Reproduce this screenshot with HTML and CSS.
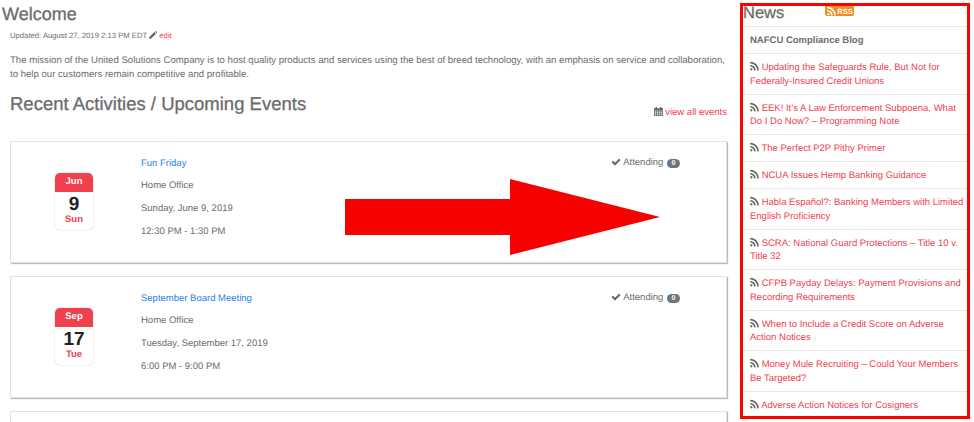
FILE: index.html
```html
<!DOCTYPE html>
<html lang="en">
<head>
    <meta charset="UTF-8">
    <title>Welcome</title>
    <link rel="stylesheet" href="styles.css">
</head>
<body>
    <svg width="0" height="0" class="defs">
        <symbol id="i-rss" viewBox="0 0 1792 1792"><path d="M576 1344q0 80-56 136t-136 56-136-56-56-136 56-136 136-56 136 56 56 136zm512 123q2 28-17 48-18 21-47 21h-135q-25 0-43-16.5t-20-41.5q-22-229-184.5-391.5t-391.5-184.5q-25-2-41.5-20t-16.5-43v-135q0-29 21-47 17-17 43-17h5q160 13 306 80.5t259 181.5q114 113 181.5 259t80.5 306zm512 2q2 27-18 47-18 20-46 20h-143q-26 0-44.5-17.5t-19.5-42.5q-12-215-101-408.5t-231.5-336-336-231.5-408.5-102q-25-1-42.5-19.5t-17.5-43.5v-143q0-28 20-46 18-18 44-18h3q262 13 501.5 120t425.5 294q187 186 294 425.5t120 501.5z"/></symbol>
        <symbol id="i-check" viewBox="0 0 1792 1792"><path d="M1671 566q0 40-28 68l-724 724-136 136q-28 28-68 28t-68-28l-136-136-362-362q-28-28-28-68t28-68l136-136q28-28 68-28t68 28l294 295 656-657q28-28 68-28t68 28l136 136q28 28 28 68z"/></symbol>
    </svg>

    <div class="page">
        <main class="main">
            <h1 class="title">Welcome</h1>
            <div class="intro">
                <p class="updated">Updated: August 27, 2019 2:13 PM EDT
                    <svg class="icon-pencil" viewBox="0 0 12 12"><path d="M0 12l.8-3.2L8 1.6 10.4 4 3.2 11.2zM8.8.8l.6-.6q.5-.4 1 0l1.400 1.400q.4.500 0 1l-.6.6z"/></svg>
                    <a href="#" class="red-link">edit</a></p>
                <p class="mission">The mission of the United Solutions Company is to host quality products and services using the best of breed technology, with an emphasis on service and collaboration,<br>to help our customers remain competitive and profitable.</p>
                <div class="events-head">
                    <h2>Recent Activities / Upcoming Events</h2>
                    <span class="all-events">
                        <svg class="icon-cal" viewBox="0 0 12 12"><path d="M2 0h2v1.500h4V0h2v1.500h2V12H0V1.500h2zM1 4.500v1.500h2V4.500zm3 0v1.500h1.700V4.500zm2.700 0v1.500H8V4.500zm2.300 0v1.500h2V4.500zM1 7v1.500h2V7zm3 0v1.500h1.700V7zm2.700 0v1.500H8V7zM9 7v1.500h2V7zM1 9.500V11h2V9.500zm3 0V11h1.700V9.500zm2.700 0V11H8V9.500zm2.300 0V11h2V9.500z" fill-rule="evenodd"/></svg>
                        <a href="#" class="red-link">view all events</a>
                    </span>
                </div>

                <div class="card">
                    <div class="cal">
                        <div class="cal-month">Jun</div>
                        <div class="cal-day">9</div>
                        <div class="cal-week">Sun</div>
                    </div>
                    <div class="card-info">
                        <a href="#" class="event-name">Fun Friday</a>
                        <div>Home Office</div>
                        <div>Sunday, June 9, 2019</div>
                        <div>12:30 PM - 1:30 PM</div>
                    </div>
                    <div class="attending"><svg class="icon-check"><use href="#i-check"/></svg> Attending <span class="badge">0</span></div>
                </div>

                <div class="card">
                    <div class="cal">
                        <div class="cal-month">Sep</div>
                        <div class="cal-day">17</div>
                        <div class="cal-week">Tue</div>
                    </div>
                    <div class="card-info">
                        <a href="#" class="event-name">September Board Meeting</a>
                        <div>Home Office</div>
                        <div>Tuesday, September 17, 2019</div>
                        <div>6:00 PM - 9:00 PM</div>
                    </div>
                    <div class="attending"><svg class="icon-check"><use href="#i-check"/></svg> Attending <span class="badge">0</span></div>
                </div>

                <div class="card"></div>
            </div>
        </main>

        <aside class="news">
            <div class="news-head">
                <h2>News</h2>
                <span class="rss-badge"><svg class="icon-rss-badge"><use href="#i-rss"/></svg>RSS</span>
            </div>
            <ul class="news-list">
                <li class="news-source">NAFCU Compliance Blog</li>
                <li><svg class="icon-rss"><use href="#i-rss"/></svg> <a href="#">Updating the Safeguards Rule, But Not for Federally-Insured Credit Unions</a></li>
                <li><svg class="icon-rss"><use href="#i-rss"/></svg> <a href="#">EEK! It’s A Law Enforcement Subpoena, What Do I Do Now? – Programming Note</a></li>
                <li><svg class="icon-rss"><use href="#i-rss"/></svg> <a href="#">The Perfect P2P Pithy Primer</a></li>
                <li><svg class="icon-rss"><use href="#i-rss"/></svg> <a href="#">NCUA Issues Hemp Banking Guidance</a></li>
                <li><svg class="icon-rss"><use href="#i-rss"/></svg> <a href="#">Habla Español?: Banking Members with Limited English Proficiency</a></li>
                <li><svg class="icon-rss"><use href="#i-rss"/></svg> <a href="#">SCRA: National Guard Protections – Title 10 v. Title 32</a></li>
                <li><svg class="icon-rss"><use href="#i-rss"/></svg> <a href="#">CFPB Payday Delays: Payment Provisions and Recording Requirements</a></li>
                <li><svg class="icon-rss"><use href="#i-rss"/></svg> <a href="#">When to Include a Credit Score on Adverse Action Notices</a></li>
                <li><svg class="icon-rss"><use href="#i-rss"/></svg> <a href="#">Money Mule Recruiting – Could Your Members Be Targeted?</a></li>
                <li><svg class="icon-rss"><use href="#i-rss"/></svg> <a href="#">Adverse Action Notices for Cosigners</a></li>
            </ul>
        </aside>
    </div>

    <!-- red annotation drawn over the page -->
    <svg class="arrow" viewBox="0 0 315 76"><polygon points="0,20 165,20 165,0 315,38 165,76 165,56 0,56"/></svg>
</body>
</html>
```

FILE: styles.css
```css
html, body {
    margin: 0;
    height: 422px;
    overflow: hidden;
}
body {
    background: #fff;
    color: #6c6c6c;
    font-family: "Liberation Sans", Arial, sans-serif;
    font-size: 9.500px;
    text-rendering: geometricPrecision;
    position: relative;
}
a {
    text-decoration: none;
}
.defs {
    position: absolute;
}
.page {
    display: flex;
    align-items: flex-start;
    height: 422px;
    overflow: hidden;
}

/* left column */
.main {
    width: 727px;
    flex: none;
}
.title {
    margin: 3px 0 0 2px;
    font-size: 18px;
    line-height: 22px;
    font-weight: normal;
    -webkit-text-stroke: 0.3px #6c6c6c;
}
.intro {
    margin-left: 10px;
}
.updated {
    margin: 5px 0 0;
    font-size: 7.700px;
    line-height: 11px;
}
.icon-pencil {
    width: 8px;
    height: 8px;
    fill: #666;
    vertical-align: -1px;
}
.red-link {
    color: #f0404e;
}
.mission {
    margin: 13px 0 0;
    font-size: 9.600px;
    line-height: 14px;
}
.events-head {
    display: flex;
    justify-content: space-between;
    height: 46px;
}
.events-head h2 {
    margin: 10px 0 0;
    font-size: 18.500px;
    line-height: 24px;
    font-weight: normal;
    -webkit-text-stroke: 0.3px #6c6c6c;
}
.all-events {
    align-self: flex-end;
    line-height: 14px;
    margin-bottom: 8px;
}
.icon-cal {
    width: 9px;
    height: 9px;
    fill: #666;
    vertical-align: -1px;
}
.card {
    display: flex;
    box-sizing: border-box;
    height: 122px;
    margin-top: 13px;
    border: 1px solid #e2e2e2;
    box-shadow: 1px 1px 1px #bbb;
    background: #fff;
}
.cal {
    width: 38px;
    height: 57px;
    margin: 31px 48px 0 44px;
    flex: none;
    border-radius: 5px;
    box-shadow: 0 0 1.500px #bbb;
    text-align: center;
    overflow: hidden;
}
.cal-month {
    height: 19px;
    background: #f0404e;
    color: #fff;
    font-weight: bold;
    line-height: 18px;
}
.cal-day {
    color: #222;
    font-size: 19px;
    font-weight: bold;
    line-height: 20px;
    margin-top: 3px;
}
.cal-week {
    color: #f0404e;
    font-weight: bold;
    line-height: 10px;
}
.card-info {
    flex: 1;
    padding-top: 14.500px;
    line-height: 14px;
}
.card-info div {
    margin-top: 8.800px;
}
.event-name {
    color: #2a80ec;
}
.attending {
    margin: 14px 46px 0 0;
    line-height: 14px;
}
.icon-check {
    width: 10px;
    height: 10px;
    fill: #666;
    vertical-align: -1.500px;
}
.badge {
    display: inline-block;
    min-width: 13px;
    height: 9px;
    margin-left: 1px;
    border-radius: 5px;
    background: #6c757d;
    color: #fff;
    font-size: 7px;
    font-weight: bold;
    line-height: 9px;
    text-align: center;
}

/* news column, red frame is part of the annotation */
.news {
    box-sizing: border-box;
    width: 230px;
    height: 416px;
    margin: 3px 0 0 13px;
    border: 3px solid #f00;
    background: #fff;
    overflow: hidden;
}
.news-head {
    display: flex;
    height: 20px;
    border-bottom: 1px solid #e8e8e8;
}
.news-head h2 {
    margin: 0;
    font-size: 16.500px;
    line-height: 13px;
    padding-top: 1px;
    font-weight: normal;
    -webkit-text-stroke: 0.3px #6c6c6c;
}
.rss-badge {
    display: flex;
    align-items: center;
    height: 10px;
    margin-left: 41px;
    padding: 0 1px;
    background: #f58a24;
    color: #fff;
    border-radius: 0 0 2px 2px;
    font-size: 7.500px;
    font-weight: bold;
}
.icon-rss-badge {
    width: 11px;
    height: 11px;
    fill: #fff;
}
.news-list {
    list-style: none;
    margin: 0;
    padding: 0;
}
.news-list li {
    padding: 7px 3px 5.500px 7px;
    line-height: 13.500px;
    border-bottom: 1px solid #e8e8e8;
}
.news-list li:last-child {
    border-bottom: none;
}
.news-list a {
    color: #f0404e;
}
.news-source {
    font-weight: bold;
}
.icon-rss {
    width: 11px;
    height: 11px;
    margin: 0 -1px 0 -1px;
    fill: #666;
    vertical-align: -2px;
}

.arrow {
    position: absolute;
    left: 345px;
    top: 179px;
    width: 315px;
    height: 76px;
    fill: #f70000;
}
```
